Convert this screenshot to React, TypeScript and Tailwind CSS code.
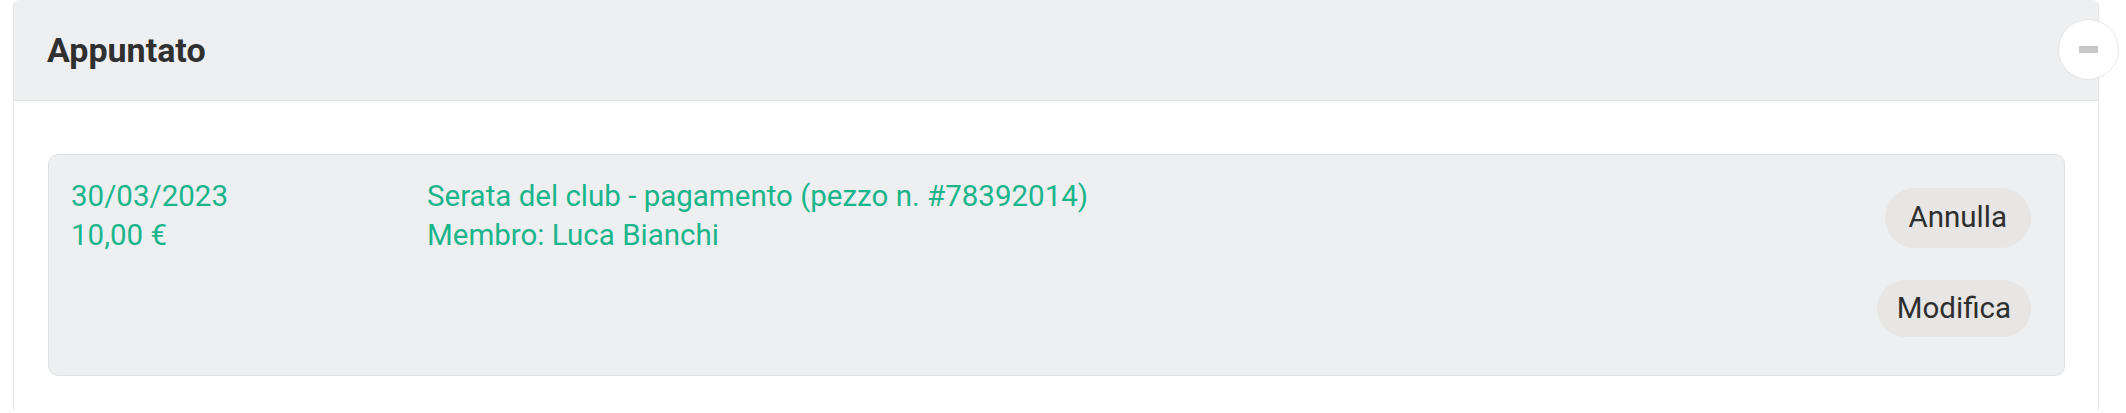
import React from "react";

export default function App() {
  return (
    <div className="w-[2126px] h-[413px] bg-white overflow-hidden" style={{ fontFamily: "Roboto, 'Noto Sans', sans-serif" }}>
      <div className="relative ml-[13px] mr-[27px] border-x border-[#e3e4e6] rounded-t-[6px] bg-white">
        <div className="h-[101px] flex items-center pl-[33px] bg-[#eeeff1] border-b border-[#e2e3e5] rounded-t-[6px]">
          <h2 className="text-[34px] font-bold text-[#303030] leading-none">Appuntato</h2>
        </div>
        <button className="absolute right-[-21px] top-[19px] w-[61px] h-[61px] rounded-full bg-white border border-[#e6e6e6] flex items-center justify-center">
          <span className="block w-[19px] h-[7px] bg-[#c8c8c8]" />
        </button>
        <div className="pt-[53px] pb-[34px] pl-[34px] pr-[33px]">
          <div className="flex justify-between bg-[#eeeff1] border border-[#e0e1e3] rounded-[10px] pl-[22px] pr-[33px] pt-[22px] pb-[38px]">
            <div className="flex text-[29.5px] leading-[39px] text-[#1ab58b]">
              <div className="w-[356px]">
                <div>30/03/2023</div>
                <div>10,00 €</div>
              </div>
              <div>
                <div>Serata del club - pagamento (pezzo n. #78392014)</div>
                <div>Membro: Luca Bianchi</div>
              </div>
            </div>
            <div className="flex flex-col items-end gap-[32px] pt-[11px]">
              <button className="h-[60px] px-[24px] rounded-full bg-[#e7e6e4] text-[29.5px] text-[#2e2e2e] leading-none">Annulla</button>
              <button className="h-[57px] px-[20px] rounded-full bg-[#e7e6e4] text-[29.5px] text-[#2e2e2e] leading-none">Modifica</button>
            </div>
          </div>
        </div>
      </div>
    </div>
  );
}
